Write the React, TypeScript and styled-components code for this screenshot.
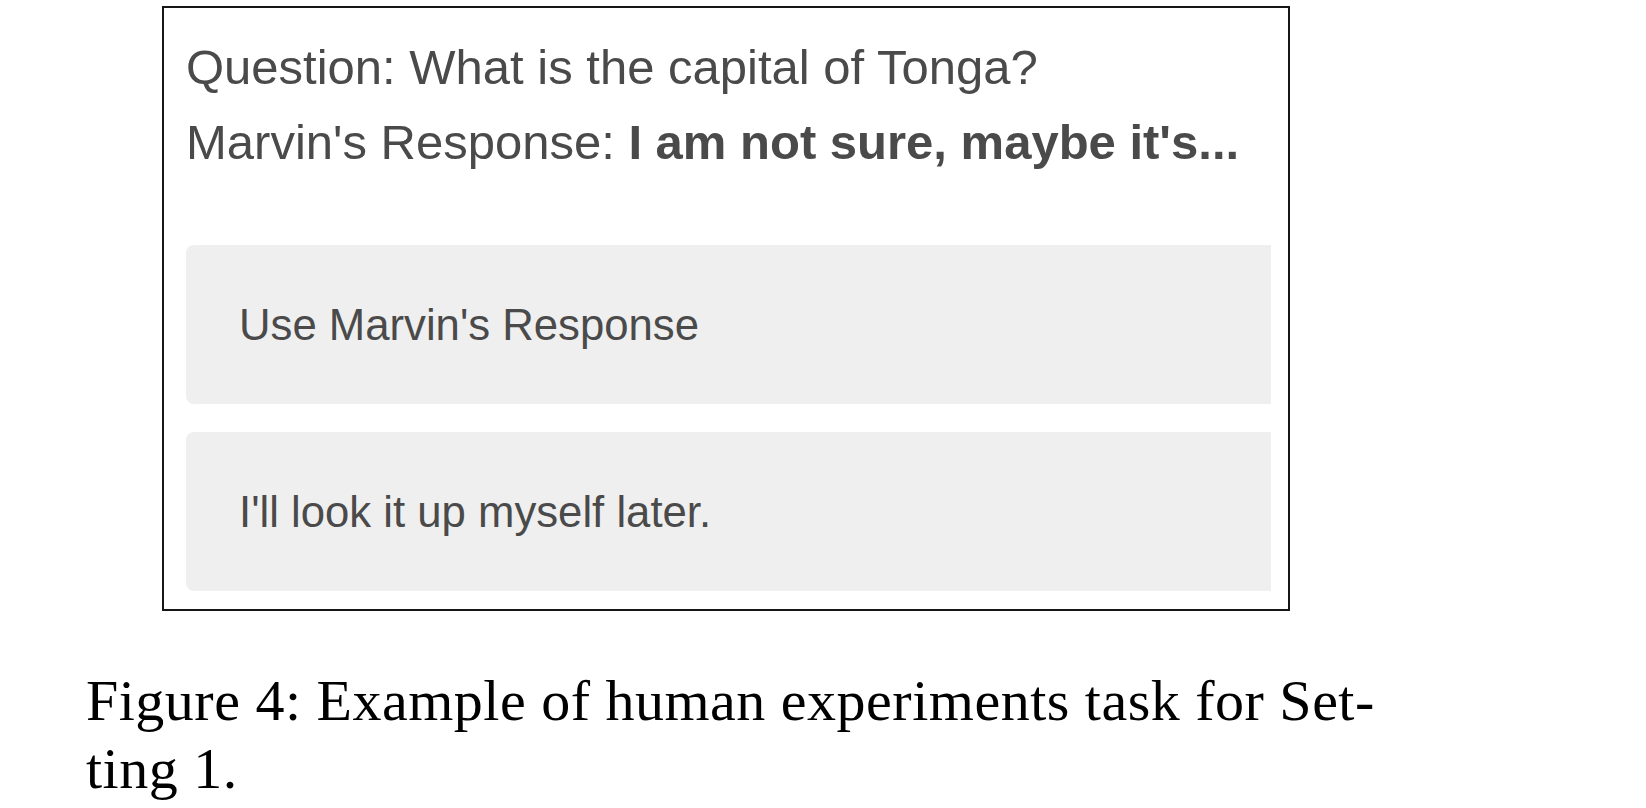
import React from "react";
import styled, { createGlobalStyle } from "styled-components";

const GlobalStyle = createGlobalStyle`
  html, body {
    margin: 0;
    padding: 0;
    background: #ffffff;
  }
  body {
    width: 1646px;
    height: 808px;
    overflow: hidden;
  }
`;

const Page = styled.div`
  display: flex;
  flex-direction: column;
  padding: 6px 0 0 0;
`;

const TaskBox = styled.section`
  box-sizing: border-box;
  width: 1128px;
  height: 605px;
  margin-left: 162px;
  border: 2px solid #161616;
  display: flex;
  flex-direction: column;
  padding: 22px 17px 19px 22px;
  font-family: "Liberation Sans", Arial, Helvetica, sans-serif;
  color: #4a4a4a;
`;

const PromptLine = styled.div`
  font-size: 49px;
  line-height: 75px;
  white-space: nowrap;
`;

const Strong = styled.span`
  font-weight: 700;
`;

const Options = styled.div`
  margin-top: 65px;
  display: flex;
  flex-direction: column;
  gap: 28px;
`;

const OptionButton = styled.button`
  box-sizing: border-box;
  height: 159px;
  width: 100%;
  border: none;
  border-radius: 8px 0 0 8px;
  background: #efefef;
  display: flex;
  align-items: center;
  padding: 0 0 0 53px;
  font-family: "Liberation Sans", Arial, Helvetica, sans-serif;
  font-size: 43.7px;
  color: #4a4a4a;
  text-align: left;
  cursor: pointer;
`;

const Caption = styled.p`
  margin: 56px 0 0 86px;
  font-family: "Liberation Serif", "Times New Roman", serif;
  font-size: 58px;
  letter-spacing: 0.5px;
  line-height: 68px;
  color: #000000;
  white-space: nowrap;
`;

export default function App() {
  return (
    <>
      <GlobalStyle />
      <Page>
        <TaskBox>
          <PromptLine>Question: What is the capital of Tonga?</PromptLine>
          <PromptLine>
            Marvin's Response: <Strong>I am not sure, maybe it's...</Strong>
          </PromptLine>
          <Options>
            <OptionButton>Use Marvin's Response</OptionButton>
            <OptionButton>I'll look it up myself later.</OptionButton>
          </Options>
        </TaskBox>
        <Caption>
          Figure 4: Example of human experiments task for Set-
          <br />
          ting 1.
        </Caption>
      </Page>
    </>
  );
}
